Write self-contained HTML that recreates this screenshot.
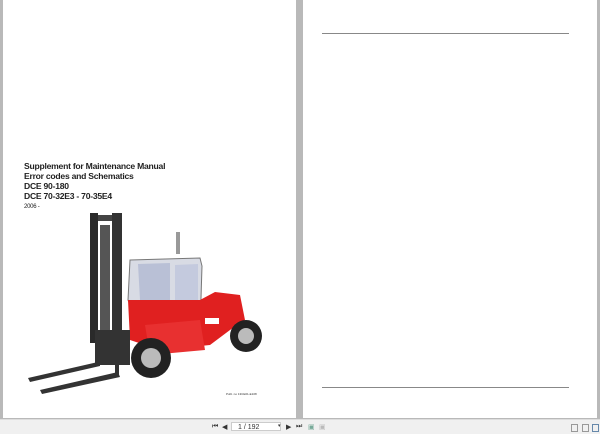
<!DOCTYPE html>
<html><head><meta charset="utf-8"><style>
html,body{margin:0;padding:0;width:600px;height:433px;overflow:hidden;background:#b9b9b9;font-family:"Liberation Sans",sans-serif}
.pg{position:absolute;background:#fff;top:0;height:418px}
#l{left:3px;width:293px}
#r{left:303px;width:294px}
.t{position:absolute;left:21px;font-size:8.6px;color:#222;font-weight:bold;letter-spacing:-0.25px;line-height:10px}
.hr{position:absolute;left:19px;width:247px;height:1px;background:#888}
#tb{position:absolute;left:0;top:419px;width:600px;height:14px;background:#f0f0f0;border-top:1px solid #ddd}
.tx{position:absolute;font-size:7px;color:#333;top:3px}
.bx{position:absolute;top:4px;width:5px;height:6px;border:1px solid #999}
</style></head><body>
<div class="pg" id="l">
<div class="t" style="top:161px">Supplement for Maintenance Manual</div>
<div class="t" style="top:171px">Error codes and Schematics</div>
<div class="t" style="top:181px">DCE 90-180</div>
<div class="t" style="top:191px">DCE 70-32E3 - 70-35E4</div>
<div class="t" style="top:202px;font-size:6px;font-weight:normal">2006 -</div>
<svg style="position:absolute;left:0;top:210px" width="293" height="190" viewBox="3 210 293 190">
<rect x="90" y="213" width="8" height="130" fill="#2a2a2a"/>
<rect x="112" y="213" width="10" height="145" fill="#333"/>
<rect x="98" y="215" width="14" height="6" fill="#444"/>
<rect x="100" y="225" width="10" height="125" fill="#555"/>
<rect x="176" y="232" width="4" height="22" fill="#999"/>
<polygon points="130,260 200,258 202,266 200,330 140,330 128,300" fill="#d8dbe4" stroke="#777"/>
<polygon points="138,264 170,263 170,300 140,300" fill="#b9c0d6"/>
<polygon points="175,265 198,264 198,300 175,300" fill="#c4cade"/>
<polygon points="128,300 200,300 215,292 240,295 245,320 230,330 210,345 160,350 130,340" fill="#e02020"/>
<polygon points="145,325 200,320 205,350 150,355" fill="#e83030"/>
<rect x="205" y="318" width="14" height="6" fill="#fff"/>
<circle cx="151" cy="358" r="20" fill="#222"/><circle cx="151" cy="358" r="10" fill="#bbb"/>
<circle cx="246" cy="336" r="16" fill="#222"/><circle cx="246" cy="336" r="8" fill="#bbb"/>
<rect x="95" y="330" width="35" height="35" fill="#333"/>
<polygon points="28,378 98,362 100,366 30,382" fill="#333"/>
<polygon points="40,390 118,372 120,377 42,394" fill="#333"/>
<rect x="96" y="340" width="4" height="26" fill="#333"/>
<rect x="115" y="348" width="4" height="28" fill="#333"/>
<text x="226" y="395" font-size="3" fill="#333" font-family="Liberation Sans">Publ. no 13CE01-E108</text>
</svg>
</div>
<div class="pg" id="r">
<div class="hr" style="top:33px"></div>
<div class="hr" style="top:387px"></div>
</div>
<div id="tb">
<span class="tx" style="left:212px">⏮</span><span class="tx" style="left:222px">◀</span>
<div style="position:absolute;left:231px;top:2px;width:50px;height:9px;background:#fff;border:1px solid #ccc;font-size:7px;line-height:9px;padding-left:6px;box-sizing:border-box;color:#333">1 / 192</div>
<span class="tx" style="left:278px;font-size:5px">▾</span>
<span class="tx" style="left:286px">▶</span><span class="tx" style="left:296px">⏭</span>
<span class="tx" style="left:308px;color:#7a9">▣</span><span class="tx" style="left:319px;color:#bbb">▣</span>
<div class="bx" style="left:571px"></div><div class="bx" style="left:582px"></div><div class="bx" style="left:592px;border-color:#68a"></div>
</div>
</body></html>
